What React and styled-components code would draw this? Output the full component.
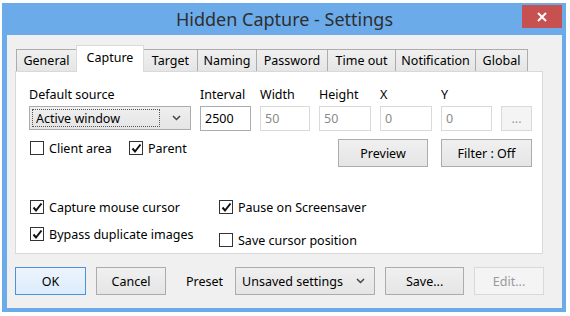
import React from "react";
import styled, { createGlobalStyle } from "styled-components";

const GlobalStyle = createGlobalStyle`
  body {
    margin: 0;
    background: #ffffff;
    font-family: "Noto Sans", "Open Sans", sans-serif;
    font-size: 12.5px;
    color: #000;
  }
`;

const tabs = [
  { name: "General", width: 61 },
  { name: "Capture", width: 68, active: true },
  { name: "Target", width: 55 },
  { name: "Naming", width: 60 },
  { name: "Password", width: 72 },
  { name: "Time out", width: 69 },
  { name: "Notification", width: 81 },
  { name: "Global", width: 53 },
];

const Chevron = () => (
  <svg width="9" height="6" viewBox="0 0 9 6">
    <polyline points="1,1 4.5,4.5 8,1" fill="none" stroke="#444" strokeWidth="1.5" />
  </svg>
);

const Check = ({ checked, label, drop }) => (
  <CheckItem $drop={drop}>
    <Box>
      {checked && (
        <svg width="11" height="11" viewBox="0 0 11 11">
          <polyline points="1.5,5.5 4,8.5 9.5,1.5" fill="none" stroke="#111" strokeWidth="2" />
        </svg>
      )}
    </Box>
    <span>{label}</span>
  </CheckItem>
);

export default function App() {
  return (
    <>
      <GlobalStyle />
      <Window>
        <TitleBar>
          <Title>Hidden Capture - Settings</Title>
          <CloseButton>
            <svg width="10" height="10" viewBox="0 0 10 10">
              <path d="M1 1 L9 9 M9 1 L1 9" stroke="#fff" strokeWidth="2" />
            </svg>
          </CloseButton>
        </TitleBar>
        <Client>
          <TabStrip>
            {tabs.map((t) => (
              <Tab key={t.name} $width={t.width} $active={t.active}>
                {t.name}
              </Tab>
            ))}
          </TabStrip>
          <Panel>
            <FieldGrid>
              <Label>Default source</Label>
              <Label>Interval</Label>
              <Label>Width</Label>
              <Label>Height</Label>
              <Label>X</Label>
              <Label>Y</Label>
              <Label />
              <Select $focus>
                <SelectText $focus>Active window</SelectText>
                <Chevron />
              </Select>
              <Input>2500</Input>
              <Input $disabled>50</Input>
              <Input $disabled>50</Input>
              <Input $disabled>0</Input>
              <Input $disabled>0</Input>
              <Button $disabled $width={31} $height={25}>...</Button>
            </FieldGrid>
            <OptionRow>
              <CheckPair>
                <Check label="Client area" />
                <Check checked label="Parent" />
              </CheckPair>
              <ButtonPair>
                <Button $width={90}>Preview</Button>
                <Button $width={91}>Filter : Off</Button>
              </ButtonPair>
            </OptionRow>
            <CheckGrid>
              <Check checked label="Capture mouse cursor" />
              <Check checked label="Pause on Screensaver" />
              <Check checked label="Bypass duplicate images" />
              <Check label="Save cursor position" drop />
            </CheckGrid>
          </Panel>
          <BottomBar>
            <Button $width={71} $default>OK</Button>
            <Button $width={70}>Cancel</Button>
            <PresetLabel>Preset</PresetLabel>
            <Select $width={140} $height={28}>
              <SelectText>Unsaved settings</SelectText>
              <Chevron />
            </Select>
            <Button $width={79}>Save...</Button>
            <Button $width={70} $disabled>Edit...</Button>
          </BottomBar>
        </Client>
      </Window>
    </>
  );
}

const Window = styled.div`
  box-sizing: border-box;
  width: 564px;
  height: 309px;
  margin: 3px 0 0 2px;
  padding: 0 4px 4px 5px;
  background: #6cabea;
  display: flex;
  flex-direction: column;
`;

const TitleBar = styled.div`
  height: 32px;
  display: grid;
  grid-template-columns: 1fr auto 1fr;
  align-items: start;
`;

const Title = styled.div`
  grid-column: 2;
  font-size: 18px;
  line-height: 33px;
  color: #2e2e2e;
`;

const CloseButton = styled.div`
  grid-column: 3;
  justify-self: end;
  width: 40px;
  height: 23px;
  margin-top: 2px;
  background: #c75050;
  display: flex;
  align-items: center;
  justify-content: center;
`;

const Client = styled.div`
  flex: 1;
  background: #f0f0f0;
  padding: 10px 0 0 8px;
`;

const TabStrip = styled.div`
  display: flex;
  align-items: flex-end;
  height: 26px;
  margin-left: 1px;
`;

const Tab = styled.div`
  box-sizing: border-box;
  width: ${(p) => p.$width}px;
  height: ${(p) => (p.$active ? 27 : 22)}px;
  margin-left: -1px;
  margin-bottom: ${(p) => (p.$active ? -1 : 0)}px;
  position: relative;
  z-index: ${(p) => (p.$active ? 1 : 0)};
  border: 1px solid ${(p) => (p.$active ? "#d9d9d9" : "#acacac")};
  border-bottom: none;
  background: ${(p) => (p.$active ? "#fff" : "linear-gradient(#f0f0f0, #e5e5e5)")};
  display: flex;
  align-items: center;
  justify-content: center;
  padding-bottom: ${(p) => (p.$active ? 3 : 0)}px;
  &:first-child {
    margin-left: 0;
  }
`;

const Panel = styled.div`
  box-sizing: border-box;
  width: 528px;
  height: 183px;
  border: 1px solid #d9d9d9;
  background: #fff;
  padding: 14px 10px 0 13px;
`;

const FieldGrid = styled.div`
  display: grid;
  grid-template-columns: 162px 51px 50px 52px 52px 51px 31px;
  column-gap: 9px;
  row-gap: 2px;
`;

const Label = styled.div`
  height: 18px;
  line-height: 18px;
  white-space: nowrap;
`;

const Select = styled.div`
  box-sizing: border-box;
  width: ${(p) => (p.$width ? `${p.$width}px` : "auto")};
  height: ${(p) => p.$height || 24}px;
  border: 1px solid #acacac;
  background: linear-gradient(#efefef, #e5e5e5);
  display: flex;
  align-items: center;
  justify-content: space-between;
  padding: 2px 9px 2px 2px;
`;

const SelectText = styled.div`
  box-sizing: border-box;
  flex: ${(p) => (p.$focus ? 1 : "none")};
  height: 100%;
  margin-right: ${(p) => (p.$focus ? 12 : 0)}px;
  padding-left: 3px;
  display: flex;
  align-items: center;
  border: 1px dotted ${(p) => (p.$focus ? "#555" : "transparent")};
  white-space: nowrap;
`;

const Input = styled.div`
  box-sizing: border-box;
  height: 25px;
  border: 1px solid ${(p) => (p.$disabled ? "#d9d9d9" : "#abadb3")};
  background: #fff;
  color: ${(p) => (p.$disabled ? "#8a8a8a" : "#000")};
  padding-left: 4px;
  display: flex;
  align-items: center;
`;

const Button = styled.div`
  box-sizing: border-box;
  width: ${(p) => p.$width}px;
  height: ${(p) => p.$height || 28}px;
  border: 1px solid
    ${(p) => (p.$default ? "#4a93dc" : p.$disabled ? "#d9d9d9" : "#acacac")};
  background: ${(p) =>
    p.$disabled ? "#f4f4f4" : p.$default ? "linear-gradient(#ecf4fc, #dcecfc)" : "linear-gradient(#f0f0f0, #e5e5e5)"};
  color: ${(p) => (p.$disabled ? "#9a9a9a" : "#000")};
  display: flex;
  align-items: center;
  justify-content: center;
  white-space: nowrap;
`;

const OptionRow = styled.div`
  display: flex;
  align-items: flex-start;
  justify-content: space-between;
  margin-top: 8px;
`;

const CheckPair = styled.div`
  display: grid;
  grid-template-columns: 99px auto;
  padding-left: 1px;
`;

const ButtonPair = styled.div`
  display: flex;
  gap: 13px;
`;

const CheckGrid = styled.div`
  display: grid;
  grid-template-columns: 189px auto;
  row-gap: 9px;
  margin-top: 31px;
  padding-left: 1px;
`;

const CheckItem = styled.div`
  display: flex;
  align-items: center;
  gap: 5px;
  height: 18px;
  white-space: nowrap;
  margin-top: ${(p) => (p.$drop ? 6 : 0)}px;
`;

const Box = styled.div`
  box-sizing: border-box;
  width: 14px;
  height: 14px;
  border: 1px solid #333;
  background: #fff;
  display: flex;
  align-items: center;
  justify-content: center;
`;

const BottomBar = styled.div`
  display: flex;
  align-items: center;
  margin-top: 13px;
  gap: 10px;
`;

const PresetLabel = styled.div`
  margin: 0 2px 0 10px;
`;
